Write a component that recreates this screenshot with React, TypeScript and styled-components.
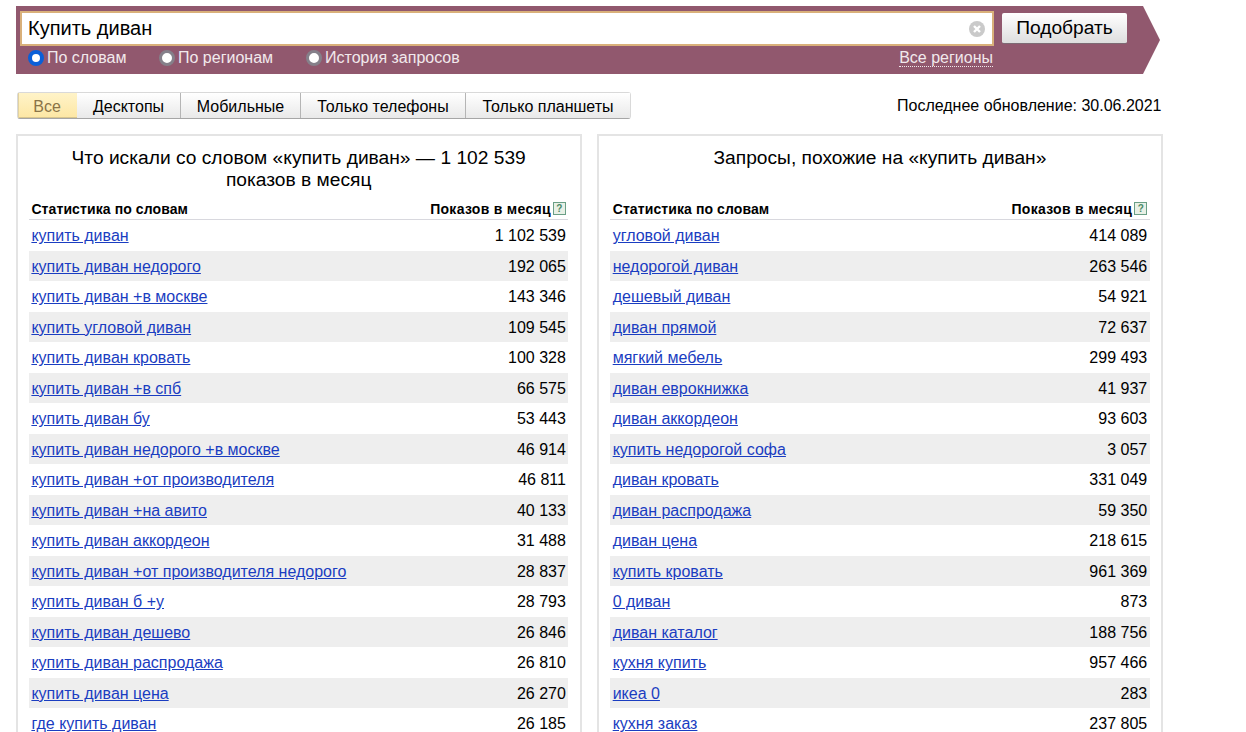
import React from 'react';
import styled, { createGlobalStyle } from 'styled-components';

interface Stat {
  phrase: string;
  count: string;
}

const wordStats: Stat[] = [
  { phrase: 'купить диван', count: '1 102 539' },
  { phrase: 'купить диван недорого', count: '192 065' },
  { phrase: 'купить диван +в москве', count: '143 346' },
  { phrase: 'купить угловой диван', count: '109 545' },
  { phrase: 'купить диван кровать', count: '100 328' },
  { phrase: 'купить диван +в спб', count: '66 575' },
  { phrase: 'купить диван бу', count: '53 443' },
  { phrase: 'купить диван недорого +в москве', count: '46 914' },
  { phrase: 'купить диван +от производителя', count: '46 811' },
  { phrase: 'купить диван +на авито', count: '40 133' },
  { phrase: 'купить диван аккордеон', count: '31 488' },
  { phrase: 'купить диван +от производителя недорого', count: '28 837' },
  { phrase: 'купить диван б +у', count: '28 793' },
  { phrase: 'купить диван дешево', count: '26 846' },
  { phrase: 'купить диван распродажа', count: '26 810' },
  { phrase: 'купить диван цена', count: '26 270' },
  { phrase: 'где купить диван', count: '26 185' },
];

const similarStats: Stat[] = [
  { phrase: 'угловой диван', count: '414 089' },
  { phrase: 'недорогой диван', count: '263 546' },
  { phrase: 'дешевый диван', count: '54 921' },
  { phrase: 'диван прямой', count: '72 637' },
  { phrase: 'мягкий мебель', count: '299 493' },
  { phrase: 'диван еврокнижка', count: '41 937' },
  { phrase: 'диван аккордеон', count: '93 603' },
  { phrase: 'купить недорогой софа', count: '3 057' },
  { phrase: 'диван кровать', count: '331 049' },
  { phrase: 'диван распродажа', count: '59 350' },
  { phrase: 'диван цена', count: '218 615' },
  { phrase: 'купить кровать', count: '961 369' },
  { phrase: '0 диван', count: '873' },
  { phrase: 'диван каталог', count: '188 756' },
  { phrase: 'кухня купить', count: '957 466' },
  { phrase: 'икеа 0', count: '283' },
  { phrase: 'кухня заказ', count: '237 805' },
];

const tabs = ['Все', 'Десктопы', 'Мобильные', 'Только телефоны', 'Только планшеты'];
const modes = ['По словам', 'По регионам', 'История запросов'];

const GlobalStyle = createGlobalStyle`
  html, body {
    margin: 0;
    height: 732px;
    overflow: hidden;
    background: #fff;
    color: #000;
    font-family: "Liberation Sans", Arial, sans-serif;
  }
`;

const Page = styled.div`
  padding: 6px 0 0 16px;
  width: 1147px;
`;

const SearchBar = styled.form`
  width: 1144px;
  height: 68px;
  box-sizing: border-box;
  padding: 5px 0 0 4px;
  background: #91586e;
  clip-path: polygon(0 0, 1127px 0, 1144px 34px, 1127px 68px, 0 68px);
`;

const InputRow = styled.div`
  display: flex;
  align-items: flex-start;
  gap: 8px;
`;

const SearchField = styled.div`
  width: 974px;
  height: 35px;
  box-sizing: border-box;
  display: flex;
  align-items: center;
  justify-content: space-between;
  padding: 0 7px 0 6px;
  background: #fff;
  border: 2px solid #d9b07a;
  font-size: 20px;
`;

const SearchButton = styled.button`
  width: 125px;
  height: 31px;
  margin-top: 2px;
  padding: 0;
  border: none;
  border-bottom: 1px solid #7d6a74;
  border-radius: 2px;
  background: linear-gradient(#ffffff, #dedede);
  font: 19.2px "Liberation Sans", Arial, sans-serif;
  color: #000;
`;

const OptionRow = styled.div`
  display: flex;
  align-items: center;
  justify-content: space-between;
  width: 973px;
  height: 23px;
  font-size: 16px;
  color: #f1e9ec;
`;

const Modes = styled.div`
  display: flex;
  margin-left: 8px;
`;

const Mode = styled.label<{ $width: number }>`
  display: flex;
  align-items: center;
  gap: 3px;
  width: ${(p) => p.$width}px;
`;

const Radio = styled.span<{ $checked?: boolean }>`
  width: 16px;
  height: 16px;
  box-sizing: border-box;
  border-radius: 50%;
  background: #fff;
  border: ${(p) => (p.$checked ? '4px solid #0a5fd8' : '3px solid #85808a')};
`;

const RegionLink = styled.a`
  border-bottom: 1px dotted #f1e9ec;
  line-height: 17px;
`;

const TabsRow = styled.div`
  display: flex;
  align-items: center;
  justify-content: space-between;
  margin: 18px 1.5px 0 1px;
`;

const Tabs = styled.div`
  display: flex;
  height: 27px;
  box-sizing: border-box;
  border: 1px solid #d9d9d9;
  border-bottom-color: #a6a6a6;
  border-radius: 3px;
`;

const Tab = styled.div<{ $active?: boolean; $width: number }>`
  width: ${(p) => p.$width}px;
  box-sizing: border-box;
  display: flex;
  align-items: center;
  justify-content: center;
  padding: 2px ${(p) => (p.$active ? 1 : 0)}px 0 0;
  font-size: 16px;
  color: ${(p) => (p.$active ? '#8a7448' : '#000')};
  background: ${(p) =>
    p.$active ? 'linear-gradient(#fff3c8, #fde7a4)' : 'linear-gradient(#ffffff, #e9e9e9)'};
  box-shadow: ${(p) => (p.$active ? 'inset 1px 0 0 #e2d2a0, inset 0 -1px 0 #d8c68f' : 'none')};
  border-right: ${(p) => (p.$active ? 'none' : '1px solid #b5b5b5')};
  &:last-child {
    border-right: none;
  }
`;

const Updated = styled.div`
  font-size: 16px;
`;

const Columns = styled.div`
  display: grid;
  grid-template-columns: 565.6px 565.6px;
  gap: 15.7px;
  margin-top: 15px;
`;

const Card = styled.section`
  border: 2px solid #e4e4e4;
  border-bottom: none;
  padding: 0 11.3px 0 11px;
`;

const CardTitle = styled.h2`
  height: 57px;
  margin: 0;
  padding: 11px 30px 0;
  box-sizing: border-box;
  font-weight: normal;
  font-size: 19.2px;
  line-height: 22px;
  text-align: center;
`;

const TableHead = styled.div`
  display: flex;
  justify-content: space-between;
  align-items: center;
  height: 27px;
  box-sizing: border-box;
  padding: 5px 2.4px 0;
  border-bottom: 1px solid #d8d8de;
  font-size: 14px;
  font-weight: bold;
  letter-spacing: 0.1px;
`;

const HeadRight = styled.span`
  display: flex;
  align-items: center;
  gap: 2px;
  letter-spacing: 0.3px;
`;

const Help = styled.span`
  width: 13px;
  height: 13px;
  box-sizing: border-box;
  display: flex;
  align-items: center;
  justify-content: center;
  border: 1.5px solid #6a9f86;
  background: #e8f0e6;
  color: #4c8a68;
  font-size: 10px;
  letter-spacing: 0;
`;

const Row = styled.div`
  display: flex;
  justify-content: space-between;
  align-items: center;
  height: 30.5px;
  box-sizing: border-box;
  padding: 2px 2.4px 0;
  font-size: 16px;
  &:nth-child(even) {
    background: #eeeeee;
  }
`;

const PhraseLink = styled.a`
  color: #1a3dc1;
  text-decoration: underline;
`;

const Count = styled.span`
  color: #000;
`;

const ClearIcon = () => (
  <svg width="16" height="16" viewBox="0 0 16 16">
    <circle cx="8" cy="8" r="8" fill="#cacaca" />
    <path d="M5 5l6 6M11 5l-6 6" stroke="#fff" strokeWidth="2.4" />
  </svg>
);

const StatTable = ({ rows }: { rows: Stat[] }) => (
  <>
    <TableHead>
      <span>Статистика по словам</span>
      <HeadRight>
        Показов в месяц
        <Help>?</Help>
      </HeadRight>
    </TableHead>
    <div>
      {rows.map((row) => (
        <Row key={row.phrase}>
          <PhraseLink>{row.phrase}</PhraseLink>
          <Count>{row.count}</Count>
        </Row>
      ))}
    </div>
  </>
);

const App = () => {
  return (
    <Page>
      <GlobalStyle />
      <SearchBar>
        <InputRow>
          <SearchField>
            Купить диван
            <ClearIcon />
          </SearchField>
          <SearchButton type="button">Подобрать</SearchButton>
        </InputRow>
        <OptionRow>
          <Modes>
            {modes.map((mode, i) => (
              <Mode key={mode} $width={[131, 147, 170][i]}>
                <Radio $checked={i === 0} />
                {mode}
              </Mode>
            ))}
          </Modes>
          <RegionLink>Все регионы</RegionLink>
        </OptionRow>
      </SearchBar>
      <TabsRow>
        <Tabs>
          {tabs.map((tab, i) => (
            <Tab key={tab} $active={i === 0} $width={[59, 104, 120, 165, 164][i]}>
              {tab}
            </Tab>
          ))}
        </Tabs>
        <Updated>Последнее обновление: 30.06.2021</Updated>
      </TabsRow>
      <Columns>
        <Card>
          <CardTitle>Что искали со словом «купить диван» — 1 102 539 показов в месяц</CardTitle>
          <StatTable rows={wordStats} />
        </Card>
        <Card>
          <CardTitle>Запросы, похожие на «купить диван»</CardTitle>
          <StatTable rows={similarStats} />
        </Card>
      </Columns>
    </Page>
  );
};

export default App;
